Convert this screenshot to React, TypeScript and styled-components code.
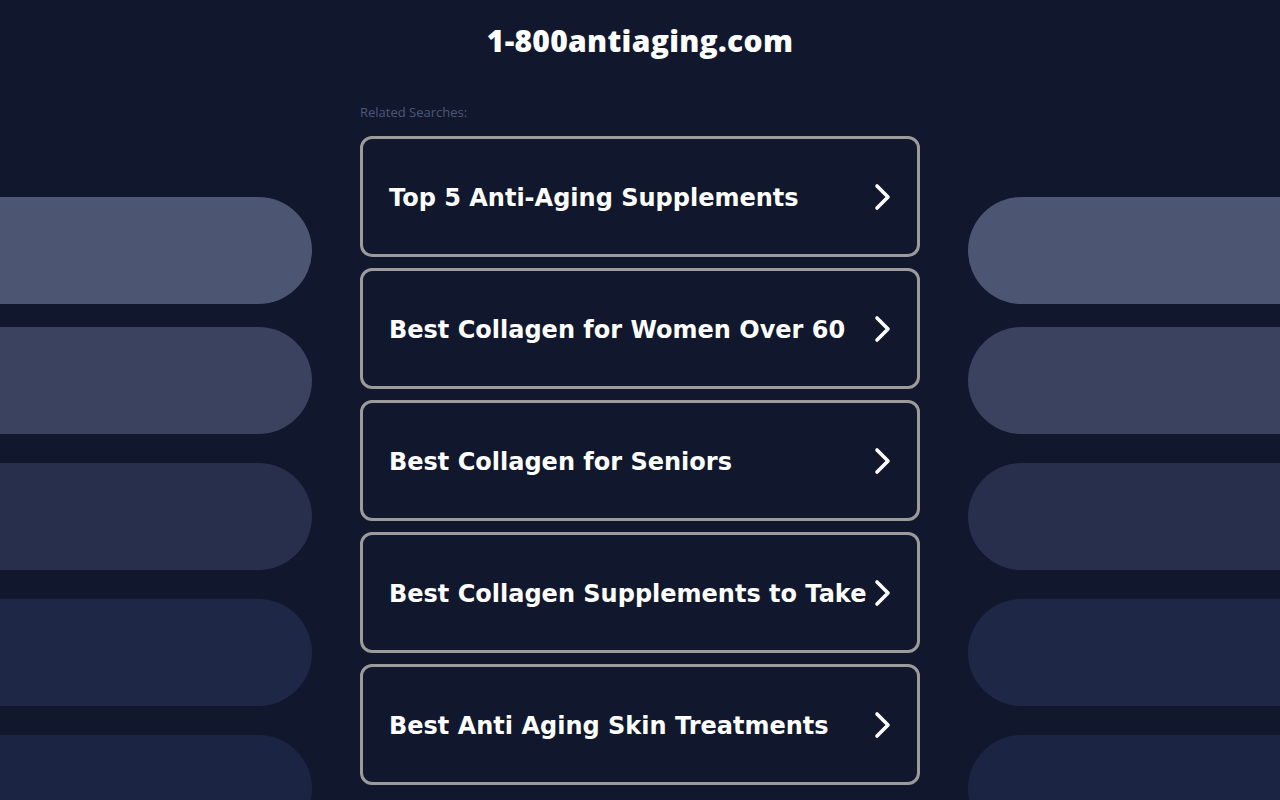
import styled, { createGlobalStyle } from 'styled-components'

const GlobalStyle = createGlobalStyle`
	html, body {
		margin: 0;
		padding: 0;
		background-color: #11172c;
	}
	body {
		font-family: 'DejaVu Sans', Verdana, sans-serif;
		overflow: hidden;
	}
`

const searches = [
	'Top 5 Anti-Aging Supplements',
	'Best Collagen for Women Over 60',
	'Best Collagen for Seniors',
	'Best Collagen Supplements to Take',
	'Best Anti Aging Skin Treatments',
]

const pills = [
	{ color: '#4c5572', gap: 0 },
	{ color: '#3a4260', gap: 23 },
	{ color: '#272f4d', gap: 29 },
	{ color: '#1f2746', gap: 29 },
	{ color: '#1c2444', gap: 29 },
]

const Chevron = () => (
	<svg width='20' height='30' viewBox='0 0 20 30'>
		<polyline
			points='4,4 15,15 4,26'
			fill='none'
			stroke='#ffffff'
			strokeWidth='3.6'
			strokeLinecap='round'
			strokeLinejoin='round'
		/>
	</svg>
)

export default function App() {
	return (
		<Root>
			<GlobalStyle />
			<Header>
				<Title>1-800antiaging.com</Title>
			</Header>
			<Body>
				<Side>
					{pills.map((p, i) => (
						<Pill key={i} $color={p.color} $gap={p.gap} $side='left' />
					))}
				</Side>
				<Center>
					<Label>Related Searches:</Label>
					<CardList>
						{searches.map(s => (
							<Card key={s}>
								<CardText>{s}</CardText>
								<Chevron />
							</Card>
						))}
					</CardList>
				</Center>
				<Side>
					{pills.map((p, i) => (
						<Pill key={i} $color={p.color} $gap={p.gap} $side='right' />
					))}
				</Side>
			</Body>
		</Root>
	)
}

const Root = styled.div`
	width: 1280px;
	height: 800px;
	overflow: hidden;
	background-color: #11172c;
	display: flex;
	flex-direction: column;
`

const Header = styled.header`
	height: 80px;
	flex-shrink: 0;
	display: flex;
	justify-content: center;
	align-items: center;
`

const Title = styled.h1`
	margin: 0;
	color: #ffffff;
	font-family: 'Open Sans', sans-serif;
	font-weight: 800;
	font-size: 30px;
	letter-spacing: 0.3px;
`

const Body = styled.div`
	margin-top: 16px;
	flex-shrink: 0;
	display: grid;
	grid-template-columns: 312px 560px 312px;
	column-gap: 48px;
`

const Side = styled.div`
	padding-top: 101px;
	display: flex;
	flex-direction: column;
`

const Pill = styled.div<{ $color: string; $gap: number; $side: 'left' | 'right' }>`
	height: 107px;
	flex-shrink: 0;
	margin-top: ${p => p.$gap}px;
	background-color: ${p => p.$color};
	border-radius: ${p => (p.$side === 'left' ? '0 54px 54px 0' : '54px 0 0 54px')};
`

const Center = styled.div`
	display: flex;
	flex-direction: column;
`

const Label = styled.div`
	margin-top: 8px;
	margin-bottom: 16px;
	line-height: 16px;
	font-family: 'Open Sans', sans-serif;
	font-size: 13px;
	color: #4d587b;
`

const CardList = styled.div`
	display: flex;
	flex-direction: column;
	gap: 11px;
`

const Card = styled.div`
	box-sizing: border-box;
	height: 121px;
	flex-shrink: 0;
	border: 3px solid #9b9b9b;
	border-radius: 12px;
	padding: 0 24px 0 26px;
	display: flex;
	align-items: center;
	justify-content: space-between;
`

const CardText = styled.span`
	padding-top: 3px;
	color: #ffffff;
	font-family: 'DejaVu Sans', Verdana, sans-serif;
	font-weight: 700;
	font-size: 24px;
	white-space: nowrap;
`
